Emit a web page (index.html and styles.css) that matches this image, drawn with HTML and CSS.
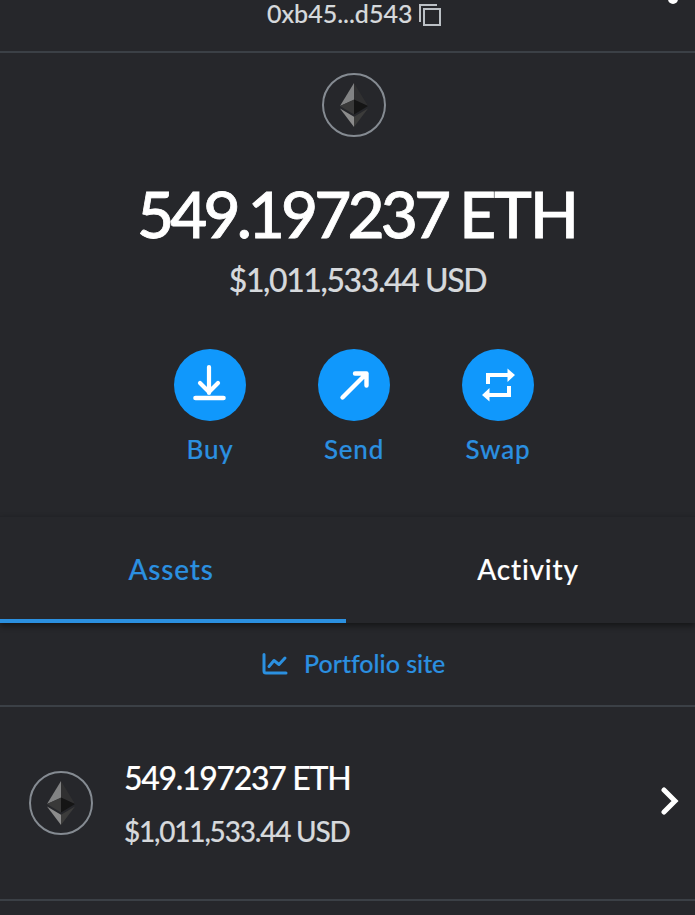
FILE: index.html
```html
<!DOCTYPE html>
<html>
<head>
  <meta charset="utf-8">
  <title>Wallet</title>
  <link rel="stylesheet" href="styles.css">
</head>
<body>

<svg class="defs">
  <symbol id="eth" viewBox="0 0 28 44">
    <path fill="#828384" d="M14 0v17L0 23z"/>
    <path fill="#303031" d="M14 0v17l14 6z"/>
    <path fill="#393939" d="M14 16.500v15L0 23z"/>
    <path fill="#151515" d="M14 16.500v15L28 23z"/>
    <path fill="#8c8c8c" d="M0 25.500l14 8.300V44z"/>
    <path fill="#3c3c3b" d="M28 25.500l-14 8.300V44z"/>
  </symbol>
</svg>

<header class="account">
  <span class="address">0xb45...d543</span>
  <svg class="copy" width="22" height="22" viewBox="0 0 22 22"><path d="M1 18V1h17M5 5h16v16H5z"/></svg>
  <span class="menu-dot"></span>
</header>

<section class="overview">
  <div class="token-icon"><svg><use href="#eth"/></svg></div>
  <div class="balance"><span class="amount">549.197237</span><span class="unit">ETH</span></div>
  <div class="fiat">$1,011,533.44 USD</div>
  <div class="actions">
    <a class="action">
      <span class="round"><svg viewBox="0 0 72 72"><path stroke-width="4.200" d="M35 18v26M26 34l9 9 9-9"/><path stroke-width="4.600" d="M21.500 49h28"/></svg></span>
      <span class="label">Buy</span>
    </a>
    <a class="action">
      <span class="round"><svg viewBox="0 0 72 72"><path stroke-width="4.400" d="M24.500 48.500L48.500 24.500M37 24.500h11.500V36.500"/></svg></span>
      <span class="label">Send</span>
    </a>
    <a class="action">
      <span class="round"><svg viewBox="0 0 72 72"><path class="flat" stroke-width="4" d="M26 35v-9h20M47 37v9H27"/><path class="solid" d="M45.500 19.500l7.500 6.500-7.500 7zM27.500 39l-7.500 7 7.500 6.500z"/></svg></span>
      <span class="label">Swap</span>
    </a>
  </div>
</section>

<nav class="tabs">
  <a class="tab active">Assets</a>
  <a class="tab">Activity</a>
</nav>

<div class="portfolio">
  <svg width="26" height="22" viewBox="0 0 26 22"><path d="M2 1.500v16.500q0 2 2 2H24M7 13.500l5-6 5 4 6-6.500"/></svg>
  <span>Portfolio site</span>
</div>

<div class="asset">
  <div class="token-icon"><svg><use href="#eth"/></svg></div>
  <div class="asset-text">
    <div class="asset-amount">549.197237 ETH</div>
    <div class="asset-fiat">$1,011,533.44 USD</div>
  </div>
  <svg class="chevron" width="18" height="28" viewBox="0 0 18 28"><path d="M3 3l11 11L3 25"/></svg>
</div>

</body>
</html>
```
FILE: styles.css
```css
body {
  margin: 0;
  height: 915px;
  overflow: hidden;
  background-color: #26272b;
  color: #fff;
  font-family: Lato, sans-serif;
  font-weight: 500;
  font-variant-ligatures: none;
  -webkit-text-stroke: 0.15px;
}
svg {
  fill: none;
  flex-shrink: 0;
}
.defs {
  display: none;
}
.account {
  position: relative;
  box-sizing: border-box;
  height: 53px;
  padding-left: 267px;
  display: flex;
  align-items: flex-start;
  border-bottom: 2px solid #3b4046;
  color: #d6d9dc;
}
.address {
  width: 152px;
  font-size: 25px;
  line-height: 27px;
}
.copy {
  margin-top: 4px;
  stroke: #bbc0c5;
  stroke-width: 2;
}
.menu-dot {
  position: absolute;
  top: -6px;
  right: 17px;
  width: 10px;
  height: 10px;
  border-radius: 50%;
  background-color: #fff;
}
.overview {
  height: 463px;
  padding: 20px 0 0 13px;
  box-sizing: border-box;
  display: flex;
  flex-direction: column;
  align-items: center;
}
.token-icon {
  box-sizing: border-box;
  width: 64px;
  height: 64px;
  border: 2px solid #858b92;
  border-radius: 50%;
  display: flex;
  align-items: center;
  justify-content: center;
  flex-shrink: 0;
}
.token-icon svg {
  width: 28px;
  height: 44px;
}
.balance {
  display: flex;
  margin-top: 38px;
  font-size: 64px;
  line-height: 77px;
  gap: 12px;
  padding-left: 6px;
  white-space: nowrap;
  -webkit-text-stroke: 0.8px;
}
.amount {
  letter-spacing: -3.9px;
}
.unit {
  letter-spacing: -2px;
}
.fiat {
  margin-top: 8px;
  padding-left: 7px;
  font-size: 32px;
  line-height: 40px;
  letter-spacing: -1.4px;
  color: #d6d9dc;
}
.actions {
  display: flex;
  gap: 72px;
  margin-top: 49px;
}
.action {
  width: 72px;
  display: flex;
  flex-direction: column;
  align-items: center;
  color: #2b90e0;
  font-size: 26px;
  line-height: 32px;
  letter-spacing: 0.8px;
}
.round {
  height: 72px;
  width: 72px;
  border-radius: 50%;
  background-color: #1098fc;
}
.round svg {
  stroke: #fff;
  stroke-linecap: round;
  stroke-linejoin: round;
}
.round .flat {
  stroke-linecap: butt;
  stroke-linejoin: miter;
}
.round .solid {
  fill: #fff;
  stroke: none;
}
.label {
  margin-top: 12px;
}
.tabs {
  position: relative;
  display: flex;
  height: 107px;
  box-sizing: border-box;
  border-top: 1px solid #222327;
  box-shadow: 0 3px 6px rgba(0,0,0,0.45);
}
.tab {
  box-sizing: border-box;
  width: 349px;
  height: 106px;
  padding-left: 15px;
  font-size: 28px;
  line-height: 104px;
  letter-spacing: 0.8px;
  text-align: center;
}
.tab.active {
  width: 346px;
  padding: 0 4px 0 0;
  border-bottom: 4px solid #2b90e0;
  color: #2b90e0;
}
.portfolio {
  box-sizing: border-box;
  height: 84px;
  padding: 0 0 2px 262px;
  display: flex;
  align-items: center;
  gap: 16px;
  border-bottom: 2px solid #3b4046;
  color: #2b90e0;
  font-size: 25px;
}
.portfolio svg {
  margin-top: 2px;
  stroke: #2b90e0;
  stroke-width: 3;
  stroke-linecap: round;
  stroke-linejoin: round;
}
.asset {
  box-sizing: border-box;
  height: 194px;
  padding: 0 16px 0 29px;
  display: flex;
  align-items: center;
  border-bottom: 2px solid #3b4046;
}
.asset-text {
  flex: 1;
  padding: 3px 0 0 31px;
}
.asset-amount {
  font-size: 32px;
  line-height: 54px;
  letter-spacing: -1.3px;
}
.asset-fiat {
  font-size: 28px;
  line-height: 53px;
  letter-spacing: -1.2px;
  color: #d6d9dc;
}
.chevron {
  margin-bottom: 4px;
  stroke: #fff;
  stroke-width: 5;
  stroke-linecap: round;
}
```
